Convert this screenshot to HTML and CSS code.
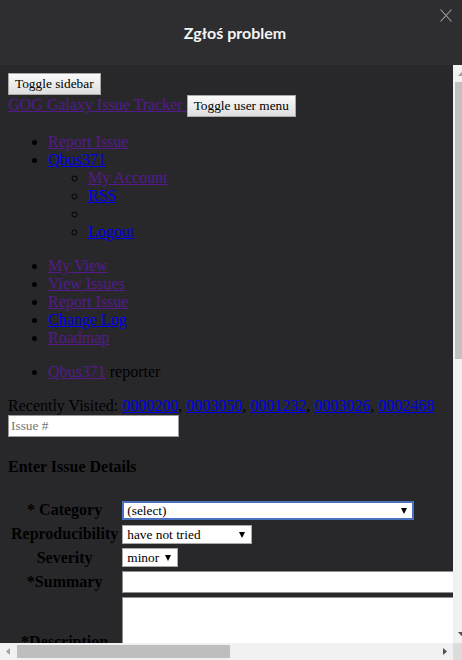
FILE: index.html
```html
<!DOCTYPE html>
<html lang="pl">
<head>
<meta charset="utf-8">
<title>Zgłoś problem</title>
<link rel="stylesheet" href="styles.css">
</head>
<body>
<div class="dialog">
  <header class="dlg-head">
    <h1 class="dlg-title">Zgłoś problem</h1>
    <button class="dlg-close" aria-label="Zamknij"><svg width="12" height="13" viewBox="0 0 12 13"><path d="M0.5 0.5L11.5 12.5M11.5 0.5L0.5 12.5" stroke="#a2a2a2" stroke-width="1.1" fill="none"/></svg></button>
  </header>
  <div class="frame">
    <div class="viewport">
      <div class="page">
        <div class="line"><button class="btn">Toggle sidebar</button></div>
        <div class="line"><a class="lnk visited" href="#">GOG Galaxy Issue Tracker </a><button class="btn">Toggle user menu</button></div>
        <ul class="menu">
          <li><a class="lnk visited" href="#">Report Issue</a></li>
          <li><a class="lnk" href="#">Qbus371</a>
            <ul class="sub">
              <li><a class="lnk visited" href="#">My Account</a></li>
              <li><a class="lnk" href="#">RSS</a></li>
              <li></li>
              <li><a class="lnk" href="#">Logout</a></li>
            </ul>
          </li>
        </ul>
        <ul class="menu">
          <li><a class="lnk visited" href="#">My View</a></li>
          <li><a class="lnk visited" href="#">View Issues</a></li>
          <li><a class="lnk visited" href="#">Report Issue</a></li>
          <li><a class="lnk" href="#">Change Log</a></li>
          <li><a class="lnk visited" href="#">Roadmap</a></li>
        </ul>
        <ul class="menu">
          <li><a class="lnk visited" href="#">Qbus371</a> reporter</li>
        </ul>
        <div class="recent">Recently Visited: <a class="lnk" href="#">0000200</a>, <a class="lnk" href="#">0003050</a>, <a class="lnk" href="#">0001232</a>, <a class="lnk" href="#">0003026</a>, <a class="lnk" href="#">0002468</a></div>
        <div class="jump"><input class="issue-input" type="text" placeholder="Issue #"></div>
        <h4 class="section-title">Enter Issue Details</h4>
        <table class="form-table">
          <tr>
            <th>* Category</th>
            <td><span class="sel sel-cat"><select class="focused"><option>(select)</option></select></span></td>
          </tr>
          <tr>
            <th>Reproducibility</th>
            <td><span class="sel sel-rep"><select><option>have not tried</option></select></span></td>
          </tr>
          <tr>
            <th>Severity</th>
            <td><span class="sel sel-sev"><select><option>minor</option></select></span></td>
          </tr>
          <tr>
            <th>*Summary</th>
            <td><input class="summary" type="text"></td>
          </tr>
          <tr>
            <th>*Description</th>
            <td><textarea class="desc"></textarea></td>
          </tr>
        </table>
      </div>
    </div>
    <div class="vbar">
      <div class="sb-btn"><svg width="17" height="17" viewBox="0 0 17 17"><polygon points="5,11 12,11 8.5,7" fill="#a3a3a3"/></svg></div>
      <div class="vthumb"></div>
      <div class="sb-fill"></div>
      <div class="sb-btn"><svg width="17" height="17" viewBox="0 0 17 17"><polygon points="5,6 12,6 8.5,10" fill="#505050"/></svg></div>
    </div>
    <div class="hbar">
      <div class="sb-btn"><svg width="17" height="17" viewBox="0 0 17 17"><polygon points="10,5 10,12 6,8.5" fill="#a3a3a3"/></svg></div>
      <div class="hthumb"></div>
      <div class="sb-fill"></div>
      <div class="sb-btn"><svg width="17" height="17" viewBox="0 0 17 17"><polygon points="7,5 7,12 11,8.5" fill="#505050"/></svg></div>
    </div>
    <div class="corner"></div>
  </div>
</div>
</body>
</html>
```

FILE: styles.css
```css
html, body {
  margin: 0;
  padding: 0;
}
body {
  background: #2e2e30;
  width: 462px;
  height: 660px;
  overflow: hidden;
  font-family: "Liberation Serif", "Times New Roman", serif;
}
.dialog {
  display: flex;
  flex-direction: column;
  height: 660px;
}
.dlg-head {
  position: relative;
  flex: none;
  height: 65px;
  display: flex;
  align-items: center;
  justify-content: center;
  background: #2e2e30;
}
.dlg-title {
  margin: 0;
  padding-left: 8px;
  font-family: Lato, "Open Sans", sans-serif;
  font-weight: 700;
  font-size: 16px;
  color: #f4f4f4;
}
.dlg-close {
  position: absolute;
  top: 9px;
  right: 10px;
  width: 12px;
  height: 13px;
  padding: 0;
  border: 0;
  background: none;
  display: flex;
}
.frame {
  flex: none;
  display: grid;
  grid-template-columns: 453px 9px;
  grid-template-rows: 578px 17px;
}
.viewport {
  overflow: hidden;
  background: #28282b;
}
.page {
  width: 880px;
  padding: 8px;
  color: #000;
  font-size: 16px;
}
.line {
  line-height: normal;
}
.btn {
  height: 22px;
  padding: 0 6px;
  font-family: "Liberation Serif", "Times New Roman", serif;
  font-size: 13.33px;
  color: #000;
  border: 1px solid #a9a9a9;
  border-radius: 0;
  background: linear-gradient(#fbfbfb, #dedede);
  vertical-align: baseline;
}
.lnk {
  color: #0000ee;
  text-decoration: underline;
}
.lnk.visited {
  color: #551a8b;
}
.menu {
  margin: 16px 0;
  padding-left: 40px;
  list-style: disc;
}
.sub {
  margin: 0;
  padding-left: 40px;
  list-style: circle;
}
.issue-input {
  box-sizing: border-box;
  width: 171px;
  height: 22px;
  margin: 0;
  padding: 1px 2px;
  border: 1px solid #9a9a9a;
  background: #fff;
  font-family: "Liberation Serif", "Times New Roman", serif;
  font-size: 13.33px;
}
.issue-input::placeholder {
  color: #757575;
}
.section-title {
  margin: 21px 0;
  font-size: 16px;
  font-weight: 700;
}
.form-table {
  border-spacing: 2px;
}
.form-table th {
  padding: 1px;
  font-weight: 700;
  text-align: center;
  vertical-align: middle;
}
.form-table td {
  padding: 1px;
  vertical-align: middle;
}
.sel {
  position: relative;
  display: inline-block;
  vertical-align: middle;
}
.sel::after {
  content: "";
  position: absolute;
  top: 7px;
  right: 7px;
  border-left: 3.5px solid transparent;
  border-right: 3.5px solid transparent;
  border-top: 6px solid #000;
}
.sel select {
  display: block;
  box-sizing: border-box;
  appearance: none;
  -webkit-appearance: none;
  height: 19px;
  margin: 0;
  padding: 0 4px;
  border: 1px solid #a9a9a9;
  border-radius: 0;
  background: #fff;
  color: #000;
  font-family: "Liberation Serif", "Times New Roman", serif;
  font-size: 13.33px;
}
.sel select.focused {
  border: 2px solid #4a70c0;
  padding-left: 3px;
}
.sel-cat select {
  width: 292px;
}
.sel-rep select {
  width: 130px;
}
.sel-sev select {
  width: 56px;
}
.summary {
  display: block;
  box-sizing: border-box;
  width: 620px;
  height: 22px;
  margin: 0;
  border: 1px solid #8e8e8e;
  background: #fff;
}
.desc {
  display: block;
  box-sizing: border-box;
  width: 620px;
  height: 90px;
  margin: 0;
  border: 1px solid #8e8e8e;
  background: #fff;
  resize: none;
}
.vbar {
  display: flex;
  flex-direction: column;
  align-items: flex-start;
  overflow: hidden;
  background: #f1f1f1;
}
.hbar {
  display: flex;
  align-items: center;
  overflow: hidden;
  background: #f1f1f1;
}
.sb-btn {
  flex: none;
  width: 17px;
  height: 17px;
  display: flex;
}
.sb-fill {
  flex: 1;
}
.vthumb {
  flex: none;
  width: 13px;
  height: 277px;
  margin-left: 2px;
  background: #c1c1c1;
}
.hthumb {
  flex: none;
  width: 213px;
  height: 13px;
  background: #bebebe;
}
.corner {
  background: #dcdcdc;
}
```
